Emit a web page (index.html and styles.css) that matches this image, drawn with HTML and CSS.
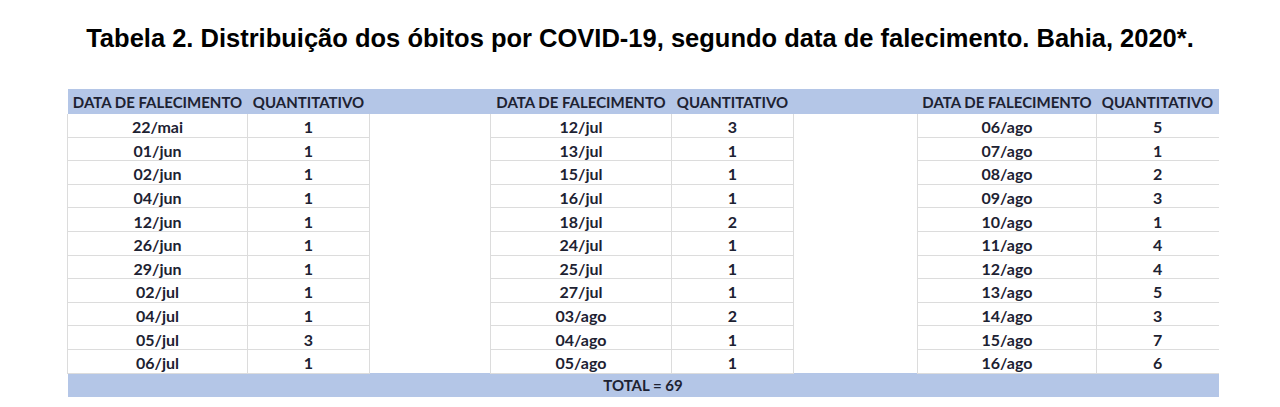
FILE: index.html
```html
<!DOCTYPE html>
<html lang="pt-BR">
<head>
<meta charset="utf-8">
<title>Tabela 2</title>
<link rel="stylesheet" href="styles.css">
</head>
<body>
<h1 class="title">Tabela 2. Distribuição dos óbitos por COVID-19, segundo data de falecimento. Bahia, 2020*.</h1>
<table class="sheet">
<colgroup>
<col class="c-date"><col class="c-qty"><col class="c-gap1">
<col class="c-date2"><col class="c-qty"><col class="c-gap2">
<col class="c-date3"><col class="c-qty">
</colgroup>
<thead>
<tr class="head">
<th>DATA DE FALECIMENTO</th><th>QUANTITATIVO</th><th></th>
<th>DATA DE FALECIMENTO</th><th>QUANTITATIVO</th><th></th>
<th>DATA DE FALECIMENTO</th><th>QUANTITATIVO</th>
</tr>
</thead>
<tbody>
<tr><td class="d">22/mai</td><td class="q">1</td><td class="gap"></td><td class="d">12/jul</td><td class="q">3</td><td class="gap"></td><td class="d">06/ago</td><td class="q last">5</td></tr>
<tr><td class="d">01/jun</td><td class="q">1</td><td class="gap"></td><td class="d">13/jul</td><td class="q">1</td><td class="gap"></td><td class="d">07/ago</td><td class="q last">1</td></tr>
<tr><td class="d">02/jun</td><td class="q">1</td><td class="gap"></td><td class="d">15/jul</td><td class="q">1</td><td class="gap"></td><td class="d">08/ago</td><td class="q last">2</td></tr>
<tr><td class="d">04/jun</td><td class="q">1</td><td class="gap"></td><td class="d">16/jul</td><td class="q">1</td><td class="gap"></td><td class="d">09/ago</td><td class="q last">3</td></tr>
<tr><td class="d">12/jun</td><td class="q">1</td><td class="gap"></td><td class="d">18/jul</td><td class="q">2</td><td class="gap"></td><td class="d">10/ago</td><td class="q last">1</td></tr>
<tr><td class="d">26/jun</td><td class="q">1</td><td class="gap"></td><td class="d">24/jul</td><td class="q">1</td><td class="gap"></td><td class="d">11/ago</td><td class="q last">4</td></tr>
<tr><td class="d">29/jun</td><td class="q">1</td><td class="gap"></td><td class="d">25/jul</td><td class="q">1</td><td class="gap"></td><td class="d">12/ago</td><td class="q last">4</td></tr>
<tr><td class="d">02/jul</td><td class="q">1</td><td class="gap"></td><td class="d">27/jul</td><td class="q">1</td><td class="gap"></td><td class="d">13/ago</td><td class="q last">5</td></tr>
<tr><td class="d">04/jul</td><td class="q">1</td><td class="gap"></td><td class="d">03/ago</td><td class="q">2</td><td class="gap"></td><td class="d">14/ago</td><td class="q last">3</td></tr>
<tr><td class="d">05/jul</td><td class="q">3</td><td class="gap"></td><td class="d">04/ago</td><td class="q">1</td><td class="gap"></td><td class="d">15/ago</td><td class="q last">7</td></tr>
<tr><td class="d">06/jul</td><td class="q">1</td><td class="gap"></td><td class="d">05/ago</td><td class="q">1</td><td class="gap"></td><td class="d">16/ago</td><td class="q last">6</td></tr>
</tbody>
<tfoot>
<tr class="total"><td colspan="8">TOTAL = 69</td></tr>
</tfoot>
</table>
</body>
</html>
```
FILE: styles.css
```css
html, body {
  margin: 0;
  padding: 0;
  background: #ffffff;
}

.title {
  margin: 23px 0 0 0;
  font-family: "Liberation Sans", Arial, sans-serif;
  font-weight: bold;
  font-size: 25.5px;
  line-height: 30px;
  color: #000000;
  text-align: center;
}

.sheet {
  margin: 36px 0 0 67px;
  width: 1151px;
  table-layout: fixed;
  border-collapse: collapse;
  border-spacing: 0;
  font-family: Lato, "Open Sans", sans-serif;
  font-weight: bold;
  color: #1d2232;
}

.c-date { width: 180px; }
.c-qty { width: 122px; }
.c-gap1 { width: 121px; }
.c-date2 { width: 181px; }
.c-gap2 { width: 124px; }
.c-date3 { width: 179px; }

.head th {
  background: #b4c6e7;
  height: 25px;
  padding: 0;
  font-size: 15px;
  font-weight: bold;
  text-align: center;
  white-space: nowrap;
  vertical-align: middle;
}

tbody td {
  height: 18.6px;
  padding: 4px 0 0 0;
  font-size: 16px;
  text-align: center;
  vertical-align: middle;
  line-height: 18px;
}

tbody td.d {
  border-left: 1px solid #dcdcdc;
  border-right: 1px solid #dcdcdc;
  border-bottom: 1px solid #dcdcdc;
}

tbody td.q {
  border-right: 1px solid #dcdcdc;
  border-bottom: 1px solid #dcdcdc;
}

tbody td.q.last {
  border-right: none;
}

tbody td.gap {
  border: none;
}

.total td {
  background: #b4c6e7;
  height: 23px;
  padding: 0;
  font-size: 15px;
  text-align: center;
  vertical-align: middle;
}
```
